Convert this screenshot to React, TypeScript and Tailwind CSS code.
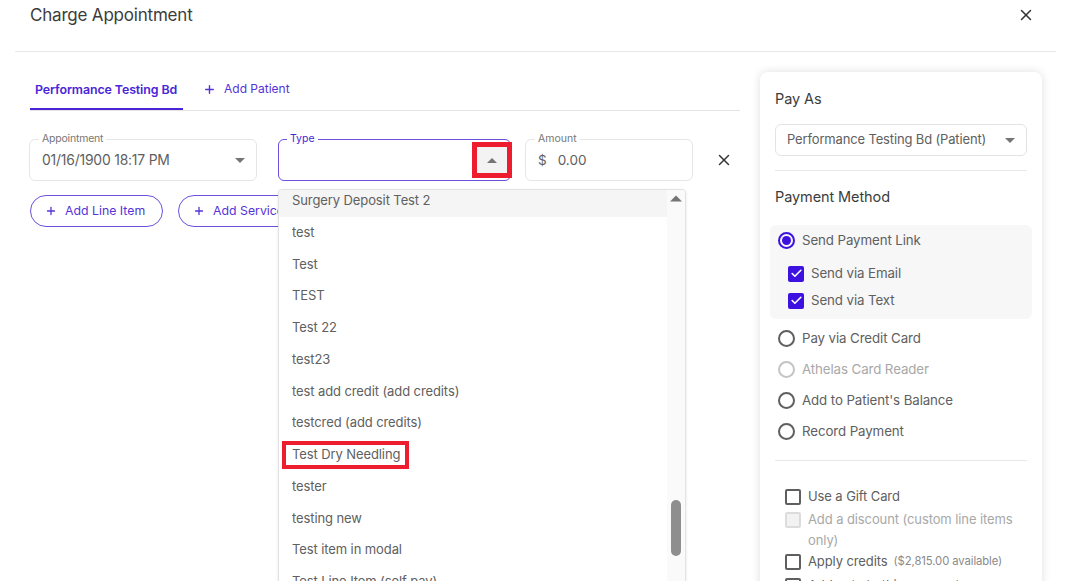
import { Plus, X, Check } from "lucide-react";

const FONT = "font-['Inter','Liberation_Sans',sans-serif]";

const typeOptions = [
  "test",
  "Test",
  "TEST",
  "Test 22",
  "test23",
  "test add credit (add credits)",
  "testcred (add credits)",
  "Test Dry Needling",
  "tester",
  "testing new",
  "Test item in modal",
  "Test Line Item (self pay)",
];

function Caret({ up = false, className = "" }: { up?: boolean; className?: string }) {
  return (
    <svg width="10" height="5" viewBox="0 0 10 5" className={className}>
      <path d={up ? "M0 5 L5 0 L10 5 Z" : "M0 0 L5 5 L10 0 Z"} fill="#757575" />
    </svg>
  );
}

function Radio({ label, checked = false, disabled = false }: { label: string; checked?: boolean; disabled?: boolean }) {
  return (
    <div className={`flex items-center gap-[7px] text-[13.3px] tracking-[-0.1px] ${disabled ? "text-[#a8a8a8]" : "text-[#606060]"}`}>
      <span
        className={`flex h-[17px] w-[17px] items-center justify-center rounded-full border-2 ${
          checked ? "border-[#3d12e0]" : disabled ? "border-[#c4c4c4]" : "border-[#5f5f5f]"
        }`}
      >
        {checked && <span className="h-[9px] w-[9px] rounded-full bg-[#3d12e0]" />}
      </span>
      {label}
    </div>
  );
}

function BlueCheck({ label }: { label: string }) {
  return (
    <div className="flex h-[20px] items-center gap-[7px] text-[13.3px] tracking-[-0.1px] text-[#606060]">
      <span className="flex h-[16px] w-[16px] items-center justify-center rounded-[2px] bg-[#3d12e0]">
        <Check size={13} strokeWidth={3} color="#fff" />
      </span>
      {label}
    </div>
  );
}

function EmptyBox({ disabled = false }: { disabled?: boolean }) {
  return (
    <span
      className={`mt-[3px] h-[16px] w-[16px] shrink-0 rounded-[2px] border-2 ${
        disabled ? "border-[#dcdcdc] bg-[#f2f2f2]" : "border-[#5f5f5f]"
      }`}
    />
  );
}

function Field({ label, purple = false, className = "", children }: { label: string; purple?: boolean; className?: string; children?: React.ReactNode }) {
  return (
    <div
      className={`relative flex h-[42px] items-center rounded-[6px] ${
        purple ? "border-[1.5px] border-[#6d4fdc]" : "border border-[#e6e6e6]"
      } ${className}`}
    >
      <span
        className={`absolute -top-[7px] bg-white px-[3px] text-[10.5px] leading-[12px] ${
          purple ? "left-[8px] text-[#4a25d8]" : "left-[9px] text-[#777777]"
        }`}
      >
        {label}
      </span>
      {children}
    </div>
  );
}

function OutlineButton({ label, className = "" }: { label: string; className?: string }) {
  return (
    <button className={`flex h-[32px] shrink-0 items-center gap-[8px] rounded-full border-[1.5px] border-[#6d4fdc] pl-[14px] text-[12.3px] text-[#5433d8] ${className}`}>
      <Plus size={12} strokeWidth={2.6} />
      {label}
    </button>
  );
}

export default function App() {
  return (
    <div className={`${FONT} h-[581px] w-[1068px] overflow-hidden bg-white`}>
      <header className="ml-[15px] mr-[12px] flex h-[52px] items-start justify-between border-b border-[#e8e8e8] pl-[15px] pr-[21px] pt-[4px]">
        <h1 className="text-[17px] leading-[22px] tracking-[-0.2px] text-[#3c3c3c]">Charge Appointment</h1>
        <X size={18} strokeWidth={2} className="mt-[2px] text-[#333333]" />
      </header>

      <div className="flex gap-[20px] pl-[30px] pt-[20px]">
        <main className="relative w-[710px]">
          <div className="flex h-[39px] items-end border-b border-[#e3e3e3]">
            <div className="flex h-[39px] w-[153px] items-center border-b-2 border-[#4a25d8] pl-[5px] pt-[2px] text-[12.4px] font-semibold tracking-[-0.1px] text-[#4a25d8]">
              Performance Testing Bd
            </div>
            <div className="ml-[20px] flex h-[37px] items-center gap-[8px] pb-[5px] text-[12px] text-[#5433d8]">
              <Plus size={13} strokeWidth={2.6} />
              Add Patient
            </div>
          </div>

          <div className="-ml-[1px] mt-[28px] flex items-center">
            <Field label="Appointment" className="w-[228px] justify-between pl-[12px] pr-[10px] text-[13.9px] tracking-[-0.2px] text-[#606060]">
              01/16/1900 18:17 PM
              <Caret className="mr-[1px]" />
            </Field>
            <Field label="Type" purple className="ml-[21px] w-[233px]">
              <span className="absolute -right-[2px] -top-[1px] mt-[3px] flex h-[36px] w-[40px] items-center justify-center border-[5px] border-[#ed1c2e] bg-[#f3f3f3]">
                <Caret up />
              </span>
            </Field>
            <Field label="Amount" className="ml-[14px] w-[168px] gap-[11px] pl-[12px] text-[13.5px] text-[#606060]">
              <span>$</span>
              <span>0.00</span>
            </Field>
            <X size={18} strokeWidth={2} className="ml-[22px] text-[#333333]" />
          </div>

          <div className="mt-[14px] flex gap-[15px]">
            <OutlineButton label="Add Line Item" className="w-[133px]" />
            <OutlineButton label="Add Service" className="w-[130px]" />
          </div>

          <div className="absolute left-[248px] top-[117px] h-[420px] w-[408px] overflow-hidden rounded-t-[4px] border border-[#e3e3e3] bg-white text-[13px] tracking-[-0.1px] text-[#606060] shadow-sm">
            <div className="absolute bottom-0 right-0 top-0 w-[18px] bg-[#fafafa]">
              <Caret up className="absolute left-[3px] top-[5px] h-[7px] w-[12px]" />
              <div className="absolute left-[4px] top-[310px] h-[56px] w-[10px] rounded-full bg-[#8e8e8e]" />
            </div>
            <div className="-mt-[5px]">
              <div className="mr-[18px] flex h-[31.75px] items-center bg-[#f5f5f5] px-[13px]">Surgery Deposit Test 2</div>
              {typeOptions.map((o) => (
                <div key={o} className="flex h-[31.75px] items-center px-[13px]">
                  {o === "Test Dry Needling" ? (
                    <span className="-ml-[10px] border-4 border-[#ed1c2e] pl-[6px] pr-[5px]">{o}</span>
                  ) : (
                    o
                  )}
                </div>
              ))}
            </div>
          </div>
        </main>

        <aside className="h-[560px] w-[282px] rounded-[8px] px-[15px] pt-[17px] shadow-[0_0_10px_rgba(0,0,0,0.13)]">
          <h2 className="text-[14.5px] leading-[20px] tracking-[-0.1px] text-[#3c3c3c]">Pay As</h2>
          <div className="mt-[15px] flex h-[32px] items-center justify-between rounded-[6px] border border-[#e3e3e3] px-[11px] text-[13px] tracking-[-0.15px] text-[#606060]">
            Performance Testing Bd (Patient)
            <Caret />
          </div>
          <div className="mt-[14px] border-t border-[#e8e8e8]" />
          <h2 className="mt-[16px] text-[14.5px] leading-[20px] tracking-[-0.1px] text-[#3c3c3c]">Payment Method</h2>

          <div className="-mx-[5px] mt-[18px] flex h-[94px] flex-col rounded-[6px] bg-[#f7f7f8] pl-[8px] pt-[6px]">
            <Radio label="Send Payment Link" checked />
            <div className="ml-[10px] mt-[13px] flex flex-col gap-[7px]">
              <BlueCheck label="Send via Email" />
              <BlueCheck label="Send via Text" />
            </div>
          </div>

          <div className="ml-[3px] mt-[10px] flex flex-col gap-[12px] [&>div]:h-[19px]">
            <Radio label="Pay via Credit Card" />
            <Radio label="Athelas Card Reader" disabled />
            <Radio label="Add to Patient's Balance" />
            <Radio label="Record Payment" />
          </div>

          <div className="mt-[19px] border-t border-[#e8e8e8]" />

          <div className="ml-[10px] mt-[25px] flex flex-col text-[13px] leading-[21px] tracking-[-0.1px] text-[#606060]">
            <div className="flex gap-[7px]">
              <EmptyBox />
              Use a Gift Card
            </div>
            <div className="mt-[2px] flex gap-[7px] text-[#a8a8a8]">
              <EmptyBox disabled />
              <span>Add a discount (custom line items only)</span>
            </div>
            <div className="flex gap-[7px]">
              <EmptyBox />
              <span>Apply credits</span>
              <span className="-ml-[1px] text-[11.3px] text-[#8a8a8a]">($2,815.00 available)</span>
            </div>
            <div className="mt-[3px] flex gap-[7px]">
              <EmptyBox />
              Add note to this payment
            </div>
          </div>
        </aside>
      </div>
    </div>
  );
}
